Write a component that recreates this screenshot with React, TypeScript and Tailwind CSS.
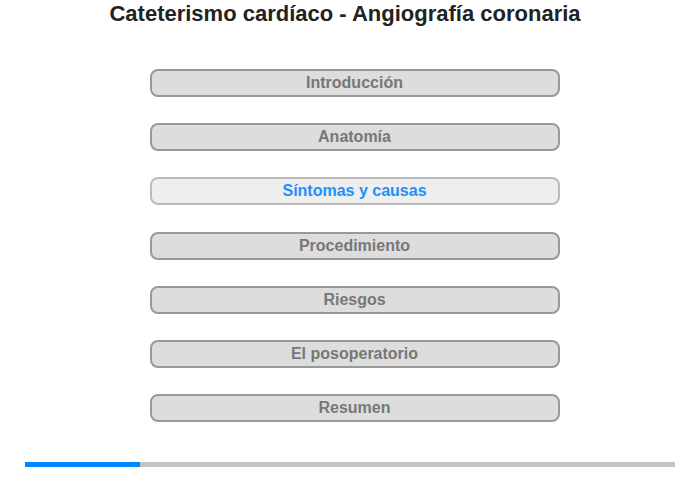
const sections = [
  "Introducción",
  "Anatomía",
  "Síntomas y causas",
  "Procedimiento",
  "Riesgos",
  "El posoperatorio",
  "Resumen",
];

const active = 2;

export default function App() {
  return (
    <div className="flex h-[480px] w-[700px] flex-col bg-white font-['Liberation_Sans',Arial,sans-serif]">
      <h1 className="pr-[10px] text-center text-[22px] leading-[28px] font-bold text-[#222]">
        Cateterismo cardíaco - Angiografía coronaria
      </h1>

      <div className="mt-[41px] flex flex-col items-center gap-[26.2px] pl-[9px]">
        {sections.map((s, i) => (
          <button
            key={s}
            className={
              i === active
                ? "h-[28px] w-[410px] rounded-[8px] border-2 border-[#bbb] bg-[#eee] text-[16px] leading-[24px] font-bold text-[#1e90ff]"
                : "h-[28px] w-[410px] rounded-[8px] border-2 border-[#999] bg-[#ddd] text-[16px] leading-[24px] font-bold text-[#777]"
            }
          >
            {s}
          </button>
        ))}
      </div>

      <div className="mx-[25px] mt-[40px] flex h-[5px] bg-[#c4c4c4]">
        <div className="w-[115px] bg-[#0088ff]" />
      </div>
    </div>
  );
}
